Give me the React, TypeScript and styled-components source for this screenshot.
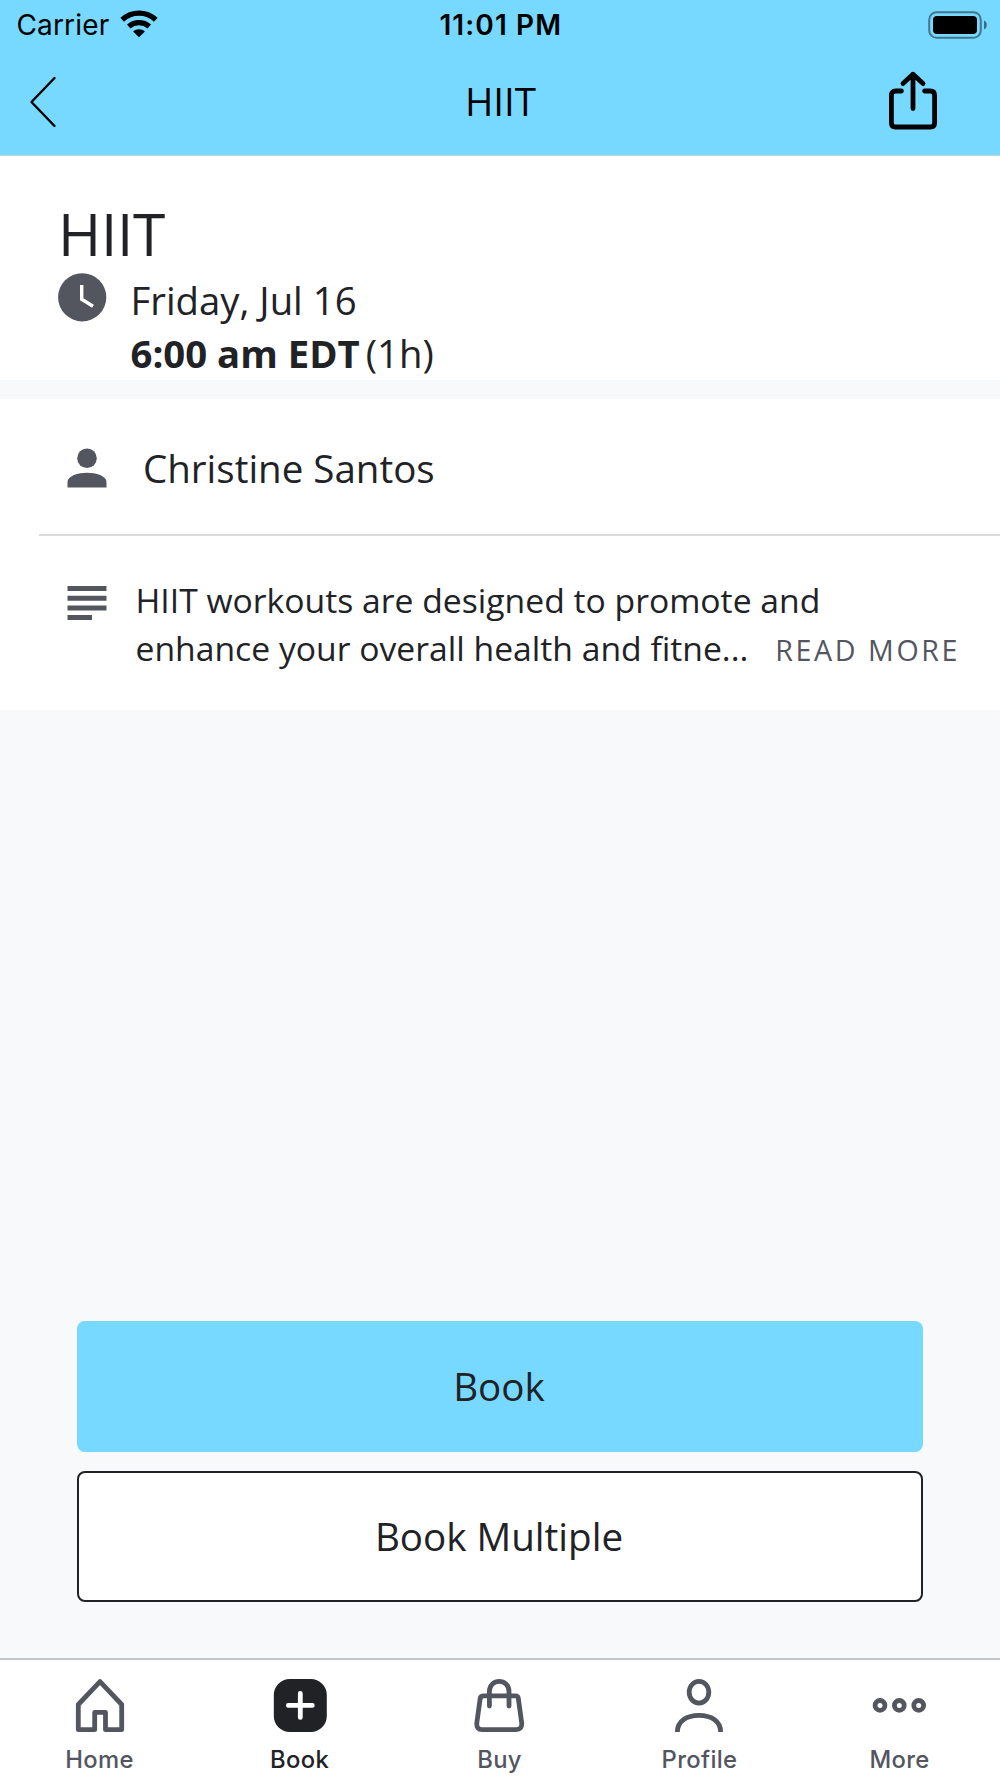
import React from 'react';
import styled, { createGlobalStyle } from 'styled-components';

const color = {
  brand: '#77d9ff',
  ink: '#212226',
  slate: '#53565f',
  page: '#f8f9fb',
  line: '#d9d9dc',
};

const GlobalStyle = createGlobalStyle`
  * { box-sizing: border-box; }
  body { margin: 0; background: ${color.page}; }
  svg { display: block; flex: none; overflow: visible; }
  button { font: inherit; color: inherit; border: 0; padding: 0; margin: 0; background: none; }
`;

const Screen = styled.div`
  width: 1000px;
  height: 1778px;
  display: flex;
  flex-direction: column;
  overflow: hidden;
  background: ${color.page};
  color: ${color.ink};
  font-family: 'Open Sans', sans-serif;
`;

const Header = styled.header`
  flex: none;
  height: 156px;
  background: ${color.brand};
  border-bottom: 1px solid #bfd3dd;
  color: #000;
`;

const StatusBar = styled.div`
  height: 49px;
  display: grid;
  grid-template-columns: 1fr auto 1fr;
  align-items: center;
  padding: 0 13px 0 16.5px;
  font-family: Inter, sans-serif;
  font-size: 28px;
  line-height: 50px;
`;

const Carrier = styled.div`
  display: flex;
  align-items: center;
  gap: 10.5px;
  line-height: 50px;
  letter-spacing: 0.15px;
  svg { margin-bottom: 2px; }
`;

const Clock = styled.div`
  margin-left: -2px;
  font-weight: 600;
  letter-spacing: 1.1px;
`;

const Battery = styled.div`
  justify-self: end;
`;

const NavBar = styled.div`
  height: 104px;
  display: grid;
  grid-template-columns: 1fr auto 1fr;
  align-items: center;
  padding: 0 62px 0 29px;
`;

const NavTitle = styled.h1`
  margin: 0 0 0 34px;
  font-size: 38.6px;
  font-weight: 400;
  line-height: 52px;
`;

const NavBack = styled.button`
  justify-self: start;
  padding-top: 2px;
`;

const NavAction = styled.button`
  justify-self: end;
  padding-bottom: 2px;
`;

const Summary = styled.section`
  flex: none;
  height: 224px;
  padding: 47px 58px 0;
  background: #fff;
`;

const ClassTitle = styled.h2`
  margin: 0;
  height: 70px;
  font-size: 58.6px;
  font-weight: 400;
  line-height: 60px;
  letter-spacing: -0.3px;
`;

const When = styled.div`
  display: flex;
  gap: 24.5px;
  font-size: 38.3px;
  line-height: 53px;
`;

const WhenText = styled.div`
  padding-top: 1px;
`;

const TimeLine = styled.div`
  white-space: nowrap;
  strong { font-weight: 700; margin-right: 6px; }
`;

const Details = styled.section`
  flex: none;
  margin-top: 19px;
  height: 311px;
  background: #fff;
`;

const InstructorRow = styled.div`
  margin-left: 39px;
  height: 137px;
  padding: 2px 0 0 28px;
  display: flex;
  align-items: center;
  gap: 36px;
  border-bottom: 2px solid ${color.line};
  font-size: 38.5px;
  line-height: 54px;
`;

const DescriptionRow = styled.div`
  display: flex;
  align-items: flex-start;
  gap: 28.5px;
  padding: 40px 40px 0 67px;
`;

const ListIcon = styled.svg`
  margin-top: 10px;
`;

const Description = styled.div`
  flex: 1;
  font-size: 33.7px;
  line-height: 48.3px;
  white-space: nowrap;
`;

const LastLine = styled.div`
  display: flex;
  justify-content: space-between;
  align-items: baseline;
`;

const ReadMore = styled.button`
  font-size: 28.6px;
  letter-spacing: 2.6px;
  color: ${color.slate};
`;

const Actions = styled.div`
  margin-top: auto;
  flex: none;
  display: flex;
  flex-direction: column;
  gap: 19px;
  padding: 0 77px 56px;
`;

const ActionButton = styled.button<{ $outlined?: boolean }>`
  && {
    height: 131px;
    padding: 0 2px 2px 0;
    border-radius: 8px;
    font-size: 38.6px;
    background: ${p => (p.$outlined ? '#fff' : color.brand)};
    border: ${p => (p.$outlined ? `2.5px solid ${color.ink}` : '0')};
  }
`;

const TabBar = styled.nav`
  flex: none;
  height: 120px;
  display: grid;
  grid-template-columns: repeat(5, 1fr);
  background: #fff;
  border-top: 2px solid #c4c5c9;
`;

const Tab = styled.button<{ $active?: boolean }>`
  && {
    display: flex;
    flex-direction: column;
    align-items: center;
    padding-top: 18px;
    font-family: Inter, sans-serif;
    font-size: 23.8px;
    font-weight: 500;
    letter-spacing: 0.35px;
    line-height: 30px;
    color: ${p => (p.$active ? color.ink : color.slate)};
  }
`;

const TabLabel = styled.span`
  margin: 13px 1px 0 0;
`;

const WifiIcon = () => (
  <svg width="38" height="28" viewBox="0 0 38 28" fill="none" stroke="#000" strokeWidth="5.3">
    <path d="M2.2 9.8C11.8 .9 26.2 .9 35.8 9.8" />
    <path d="M8.7 16.5C14.8 11.4 23.2 11.4 29.3 16.5" />
    <path d="M13.1 21.6C16.5 18.5 21.5 18.5 24.9 21.6L19 27.3Z" fill="#000" stroke="none" />
  </svg>
);

const BatteryIcon = () => (
  <svg width="59" height="28" viewBox="0 0 59 28">
    <rect x="1.2" y="1.2" width="51.6" height="25.6" rx="7.5" fill="none" stroke="#000" strokeOpacity=".45" strokeWidth="2" />
    <rect x="5" y="5" width="44" height="18" rx="4" />
    <path d="M56 9.5C59.7 11 59.7 17 56 18.6Z" fillOpacity=".5" />
  </svg>
);

const BackIcon = () => (
  <svg width="28" height="52" viewBox="0 0 28 52" fill="none" stroke="#000" strokeWidth="2.4" strokeLinecap="round" strokeLinejoin="round">
    <path d="M25.5 2L2.5 26L25.5 50" />
  </svg>
);

const ShareIcon = () => (
  <svg width="50" height="60" viewBox="0 0 50 60" fill="none" stroke="#000" strokeWidth="4.8" strokeLinecap="round" strokeLinejoin="round">
    <path d="M13.4 21H7.6Q3.4 21 3.4 25.3V52.7Q3.4 57 7.6 57H42.4Q46.6 57 46.6 52.7V25.3Q46.6 21 42.4 21H36.6" />
    <path d="M25 38.5V4.2M15 13.6L25 4.2L35 13.6" />
  </svg>
);

const ClockIcon = () => (
  <svg width="48" height="48" viewBox="0 0 48 48">
    <circle cx="24.2" cy="24.3" r="24.1" fill={color.slate} />
    <path d="M23.7 12V26.3L35 33.2" fill="none" stroke="#fff" strokeWidth="3.4" />
  </svg>
);

const PersonIcon = () => (
  <svg width="40" height="40" viewBox="0 0 40 40" fill={color.slate}>
    <circle cx="20" cy="10.2" r="9.8" />
    <path d="M.5 39.5V34C.5 28 11 24.8 20 24.8S39.5 28 39.5 34V39.5Z" />
  </svg>
);

const tabs: { label: string; active?: boolean; icon: React.ReactNode }[] = [
  {
    label: 'Home',
    icon: <path d="M27 3.6L48.7 26.5V51.7H32.5V34.4H21.7V51.7H5.3V26.5Z" />,
  },
  {
    label: 'Book',
    active: true,
    icon: (
      <>
        <rect x=".8" y="1" width="53" height="53" rx="16" fill={color.ink} stroke="none" />
        <path d="M15.3 27.4H39.3M27.3 15.4V39.4" stroke="#fff" />
      </>
    ),
  },
  {
    label: 'Buy',
    icon: (
      <path d="M10.6 17.8H42.4Q45 17.8 45.3 20.3L48.7 45Q49.2 51.6 43 51.6H9Q3.3 51.6 3.8 45L7.2 20.3Q7.5 17.8 10.6 17.8ZM16.4 28V13.5C16.4 .1 36 .1 36 13.5V28" />
    ),
  },
  {
    label: 'Profile',
    icon: (
      <>
        <ellipse cx="26" cy="14.2" rx="9.8" ry="10.9" />
        <path strokeLinecap="butt" d="M4.4 54C4.4 43 14 37.4 26 37.4S47.6 43 47.6 54" />
      </>
    ),
  },
  {
    label: 'More',
    icon: (
      <>
        <circle cx="7" cy="27.4" r="4.9" />
        <circle cx="26.3" cy="27.4" r="4.9" />
        <circle cx="45.7" cy="27.4" r="4.9" />
      </>
    ),
  },
];

export default function App() {
  return (
    <Screen>
      <GlobalStyle />
      <Header>
        <StatusBar>
          <Carrier>
            Carrier
            <WifiIcon />
          </Carrier>
          <Clock>11:01 PM</Clock>
          <Battery>
            <BatteryIcon />
          </Battery>
        </StatusBar>
        <NavBar>
          <NavBack aria-label="Back">
            <BackIcon />
          </NavBack>
          <NavTitle>HIIT</NavTitle>
          <NavAction aria-label="Share">
            <ShareIcon />
          </NavAction>
        </NavBar>
      </Header>

      <Summary>
        <ClassTitle>HIIT</ClassTitle>
        <When>
          <ClockIcon />
          <WhenText>
            <div>Friday, Jul 16</div>
            <TimeLine>
              <strong>6:00 am EDT</strong>(1h)
            </TimeLine>
          </WhenText>
        </When>
      </Summary>

      <Details>
        <InstructorRow>
          <PersonIcon />
          Christine Santos
        </InstructorRow>
        <DescriptionRow>
          <ListIcon width="40" height="34" viewBox="0 0 40 34" fill={color.slate}>
            <path d="M.5 0H39.5V5H.5ZM.5 9.7H39.5V14.7H.5ZM.5 19.4H39.5V24.4H.5ZM.5 29.1H25V34H.5Z" />
          </ListIcon>
          <Description>
            <div>HIIT workouts are designed to promote and</div>
            <LastLine>
              enhance your overall health and fitne...
              <ReadMore>READ MORE</ReadMore>
            </LastLine>
          </Description>
        </DescriptionRow>
      </Details>

      <Actions>
        <ActionButton>Book</ActionButton>
        <ActionButton $outlined>Book Multiple</ActionButton>
      </Actions>

      <TabBar>
        {tabs.map(tab => (
          <Tab key={tab.label} $active={tab.active}>
            <svg width="54" height="54" viewBox="0 0 54 54" fill="none" stroke={color.slate} strokeWidth="4.8" strokeLinecap="round" strokeLinejoin="round">
              {tab.icon}
            </svg>
            <TabLabel>{tab.label}</TabLabel>
          </Tab>
        ))}
      </TabBar>
    </Screen>
  );
}
